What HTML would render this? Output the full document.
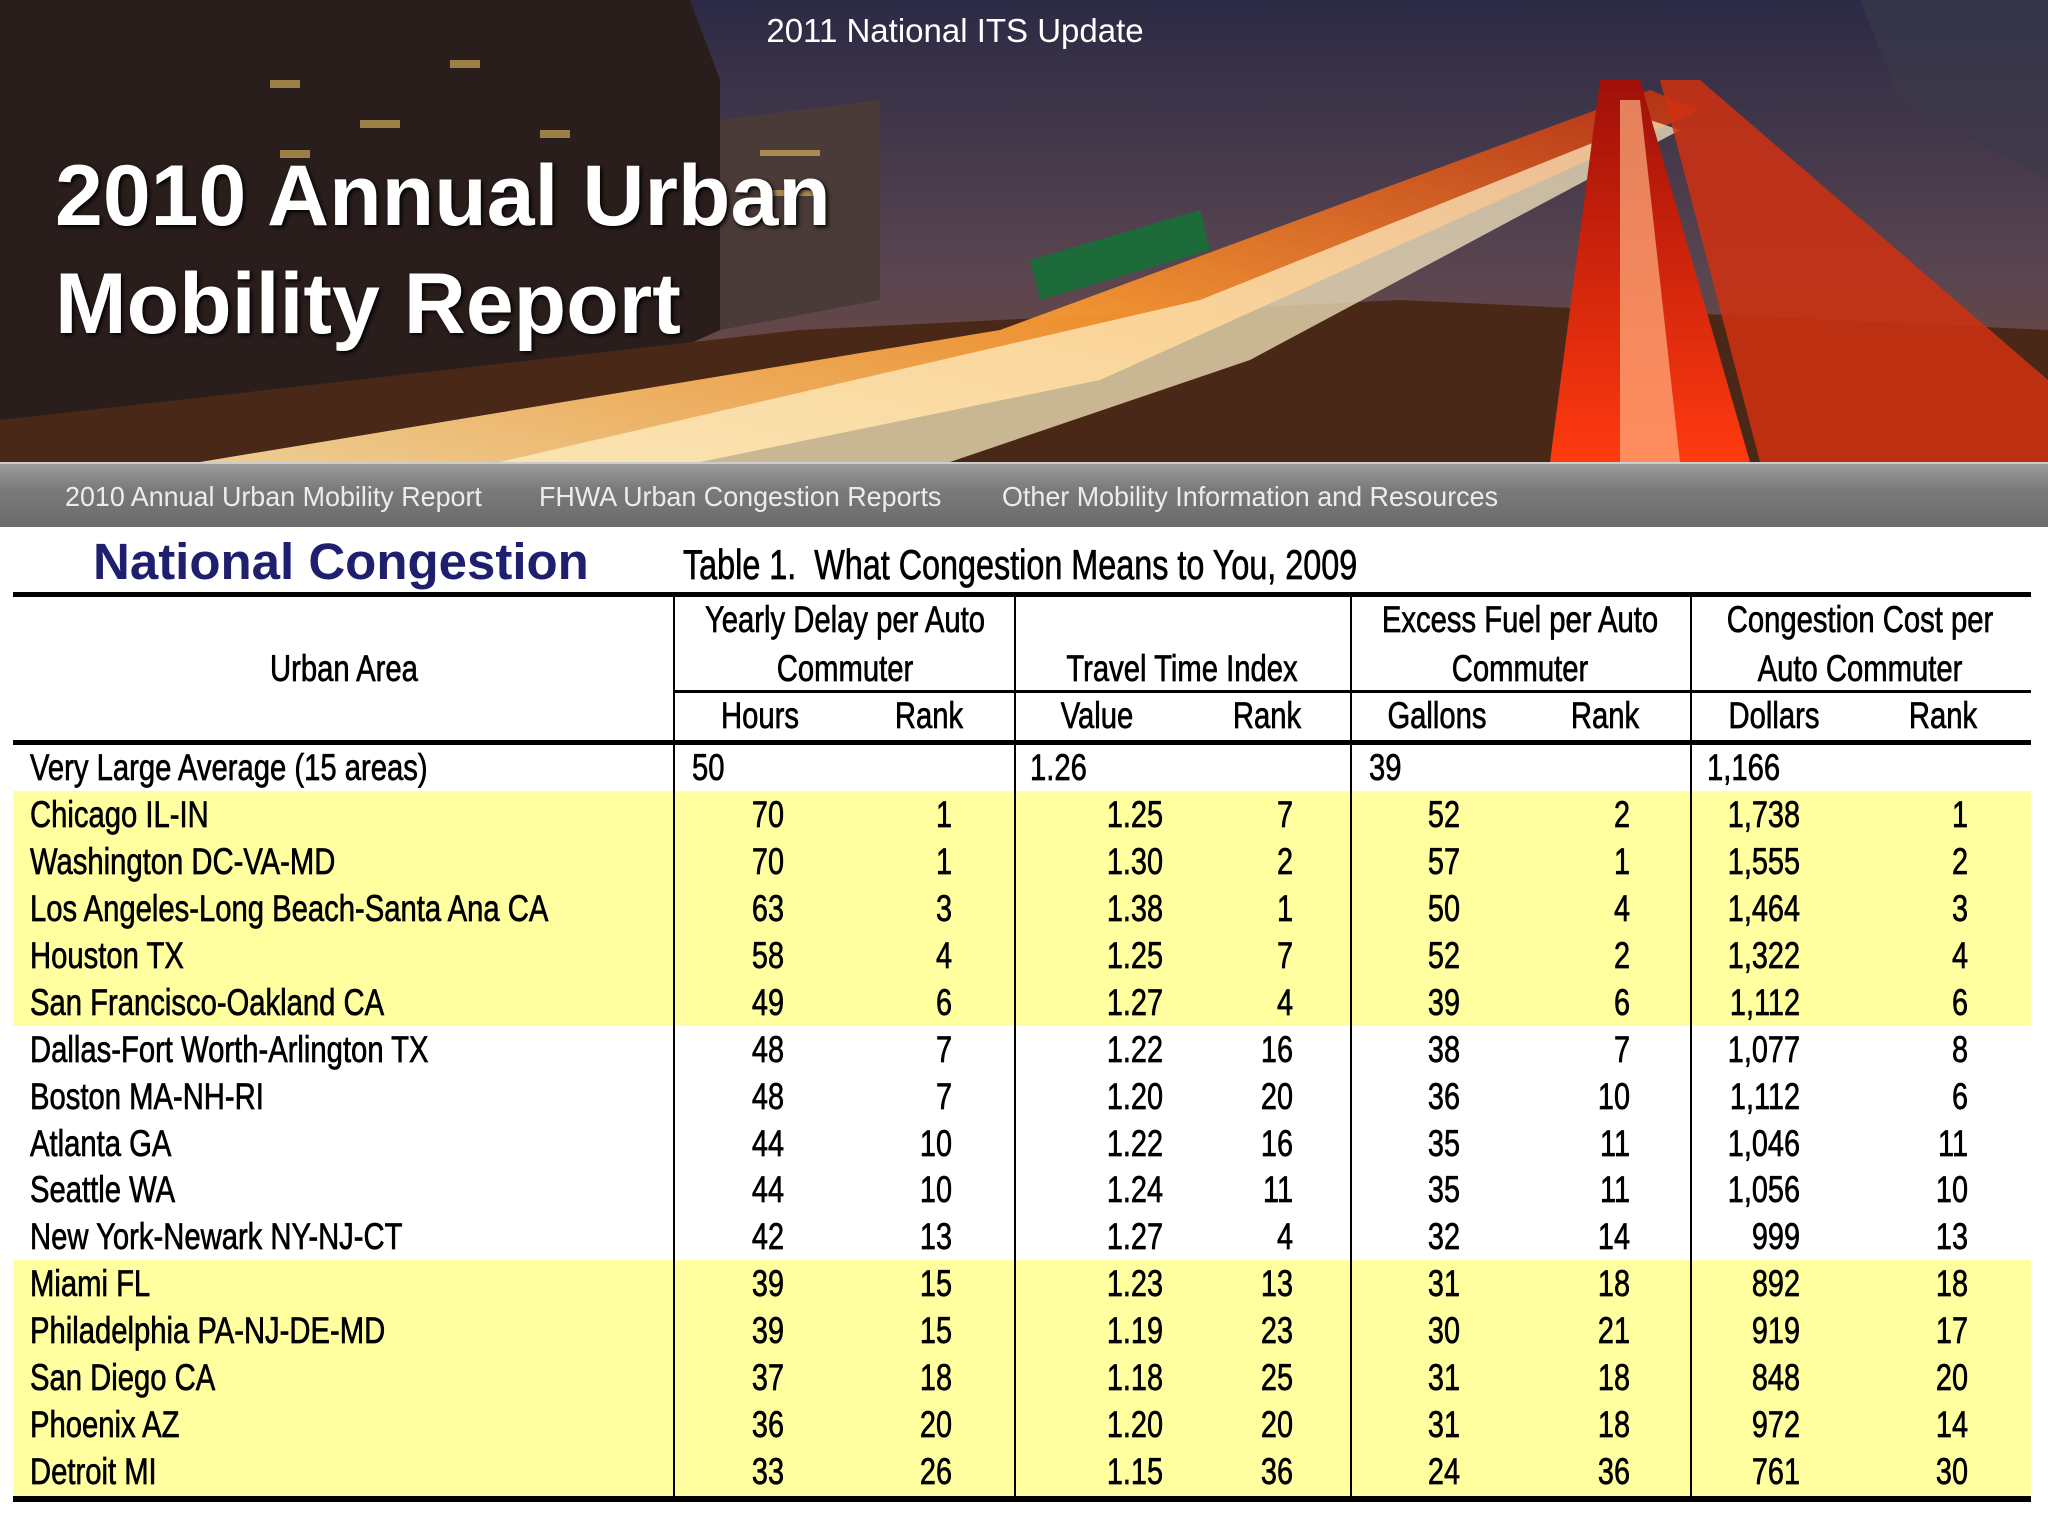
<!DOCTYPE html>
<html><head><meta charset="utf-8">
<style>
*{margin:0;padding:0;box-sizing:border-box}
html,body{width:2048px;height:1536px;overflow:hidden;background:#fff;font-family:"Liberation Sans",Arial,sans-serif}
#hdr{position:absolute;left:0;top:0;width:2048px;height:462px;overflow:hidden}
#nav{position:absolute;left:0;top:462px;width:2048px;height:65px;background:linear-gradient(#9c9c9c,#7a7a7a 40%,#6c6c6c);border-top:2px solid #ccc}
#nav span{position:absolute;top:17px;color:#ececec;font-size:28px;transform:scaleX(.96);transform-origin:left}
.t{position:absolute;white-space:nowrap;font-size:37px;line-height:46px;height:46px;color:#000;-webkit-text-stroke:0.7px #000}
.r{width:300px;text-align:right;transform:scaleX(.78);transform-origin:right}
.l{transform:scaleX(.79);transform-origin:left}
.c{width:400px;text-align:center;transform:scaleX(.79);transform-origin:center}
.hl{position:absolute;background:#000}
.y{position:absolute;left:13px;width:2018px;background:#ffff9f}
</style></head><body>
<div id="hdr">
<svg width="2048" height="462" viewBox="0 0 2048 462">
<defs>
<linearGradient id="sky" x1="0" y1="0" x2="0" y2="1"><stop offset="0" stop-color="#2c2a45"/><stop offset=".6" stop-color="#5a4550"/><stop offset="1" stop-color="#7a4a30"/></linearGradient>
<linearGradient id="road" x1="0" y1="1" x2="1" y2="0"><stop offset="0" stop-color="#ffe0a0"/><stop offset=".5" stop-color="#ff9a30"/><stop offset="1" stop-color="#c03010"/></linearGradient>
<linearGradient id="red" x1="0" y1="1" x2="0" y2="0"><stop offset="0" stop-color="#ff3a10"/><stop offset="1" stop-color="#a01008"/></linearGradient>
</defs>
<rect width="2048" height="462" fill="url(#sky)"/>
<polygon points="0,0 690,0 720,80 720,330 520,420 0,420" fill="#2a1e1c"/>
<polygon points="720,120 880,100 880,300 720,330" fill="#4a3a38"/>
<g fill="#e8c060" opacity=".6">
<rect x="270" y="80" width="30" height="8"/><rect x="360" y="120" width="40" height="8"/><rect x="280" y="150" width="30" height="8"/><rect x="540" y="130" width="30" height="8"/><rect x="450" y="60" width="30" height="8"/><rect x="760" y="150" width="60" height="6"/><rect x="760" y="190" width="60" height="6"/></g>
<polygon points="0,420 0,462 2048,462 2048,330 1400,300 800,330" fill="#4a2818"/>
<polygon points="200,462 1000,330 1650,90 1700,110 1100,380 700,462" fill="url(#road)" opacity=".9"/>
<polygon points="500,462 1200,300 1650,120 1680,130 1250,360 950,462" fill="#fff2c8" opacity=".7"/>
<polygon points="1550,462 1600,80 1640,80 1750,462" fill="url(#red)"/>
<polygon points="1760,462 1660,80 1700,80 2048,380 2048,462" fill="#d03010" opacity=".85"/>
<polygon points="1620,462 1620,100 1640,100 1680,462" fill="#ffb080" opacity=".7"/>
<polygon points="1030,260 1200,210 1210,250 1040,300" fill="#1d6a3a"/>
<polygon points="1860,0 2048,0 2048,180 1900,100" fill="#3a3a4a" opacity=".6"/>
</svg>
<div style="position:absolute;left:0;width:1910px;top:12px;text-align:center;color:#fff;font-size:33px">2011 National ITS Update</div>
<div style="position:absolute;left:55px;top:142px;color:#fff;font-weight:bold;font-size:86px;line-height:108px;text-shadow:2px 2px 4px #000">2010 Annual Urban<br>Mobility Report</div>
</div>
<div id="nav"><span style="left:65px">2010 Annual Urban Mobility Report</span><span style="left:539px">FHWA Urban Congestion Reports</span><span style="left:1002px">Other Mobility Information and Resources</span></div>

<div style="position:absolute;left:93px;top:532px;color:#1f1f70;font-weight:bold;font-size:51px;line-height:60px">National Congestion</div>
<div class="t l" style="left:683px;top:542px;font-size:42px;transform:scaleX(.77)">Table 1.&nbsp; What Congestion Means to You, 2009</div>

<div class="y" style="top:791px;height:235px"></div>
<div class="y" style="top:1260px;height:237px"></div>

<div class="hl" style="left:13px;top:592px;width:2018px;height:5px"></div>
<div class="hl" style="left:674px;top:690px;width:1357px;height:3px"></div>
<div class="hl" style="left:13px;top:740px;width:2018px;height:5px"></div>
<div class="hl" style="left:13px;top:1496px;width:2018px;height:6px"></div>
<div class="hl" style="left:673px;top:594px;width:2px;height:904px"></div>
<div class="hl" style="left:1014px;top:594px;width:2px;height:904px"></div>
<div class="hl" style="left:1350px;top:594px;width:2px;height:904px"></div>
<div class="hl" style="left:1690px;top:594px;width:2px;height:904px"></div>

<div class="t c" style="left:144px;top:646px">Urban Area</div>
<div class="t c" style="left:645px;top:597px">Yearly Delay per Auto</div>
<div class="t c" style="left:645px;top:646px">Commuter</div>
<div class="t c" style="left:982px;top:646px">Travel Time Index</div>
<div class="t c" style="left:1320px;top:597px">Excess Fuel per Auto</div>
<div class="t c" style="left:1320px;top:646px">Commuter</div>
<div class="t c" style="left:1660px;top:597px">Congestion Cost per</div>
<div class="t c" style="left:1660px;top:646px">Auto Commuter</div>
<div class="t c" style="left:560px;top:693px">Hours</div>
<div class="t c" style="left:729px;top:693px">Rank</div>
<div class="t c" style="left:897px;top:693px">Value</div>
<div class="t c" style="left:1067px;top:693px">Rank</div>
<div class="t c" style="left:1237px;top:693px">Gallons</div>
<div class="t c" style="left:1405px;top:693px">Rank</div>
<div class="t c" style="left:1574px;top:693px">Dollars</div>
<div class="t c" style="left:1743px;top:693px">Rank</div>

<div class="t l" style="left:30px;top:745px">Very Large Average (15 areas)</div>
<div class="t l" style="left:692px;top:745px">50</div>
<div class="t l" style="left:1030px;top:745px">1.26</div>
<div class="t l" style="left:1369px;top:745px">39</div>
<div class="t l" style="left:1707px;top:745px">1,166</div>

<div id="rows"></div>
<script>
var d=[["Chicago IL-IN",70,1,"1.25",7,52,2,"1,738",1],["Washington DC-VA-MD",70,1,"1.30",2,57,1,"1,555",2],["Los Angeles-Long Beach-Santa Ana CA",63,3,"1.38",1,50,4,"1,464",3],["Houston TX",58,4,"1.25",7,52,2,"1,322",4],["San Francisco-Oakland CA",49,6,"1.27",4,39,6,"1,112",6],["Dallas-Fort Worth-Arlington TX",48,7,"1.22",16,38,7,"1,077",8],["Boston MA-NH-RI",48,7,"1.20",20,36,10,"1,112",6],["Atlanta GA",44,10,"1.22",16,35,11,"1,046",11],["Seattle WA",44,10,"1.24",11,35,11,"1,056",10],["New York-Newark NY-NJ-CT",42,13,"1.27",4,32,14,"999",13],["Miami FL",39,15,"1.23",13,31,18,"892",18],["Philadelphia PA-NJ-DE-MD",39,15,"1.19",23,30,21,"919",17],["San Diego CA",37,18,"1.18",25,31,18,"848",20],["Phoenix AZ",36,20,"1.20",20,31,18,"972",14],["Detroit MI",33,26,"1.15",36,24,36,"761",30]];
var R=[784,952,1163,1293,1460,1630,1800,1968],h="";
d.forEach(function(r,i){var top=Math.round(792+46.93*i);
h+='<div class="t l" style="left:30px;top:'+top+'px">'+r[0]+'</div>';
for(var j=0;j<8;j++)h+='<div class="t r" style="left:'+(R[j]-300)+'px;top:'+top+'px">'+r[j+1]+'</div>';});
document.getElementById("rows").innerHTML=h;
</script>
</body></html>
